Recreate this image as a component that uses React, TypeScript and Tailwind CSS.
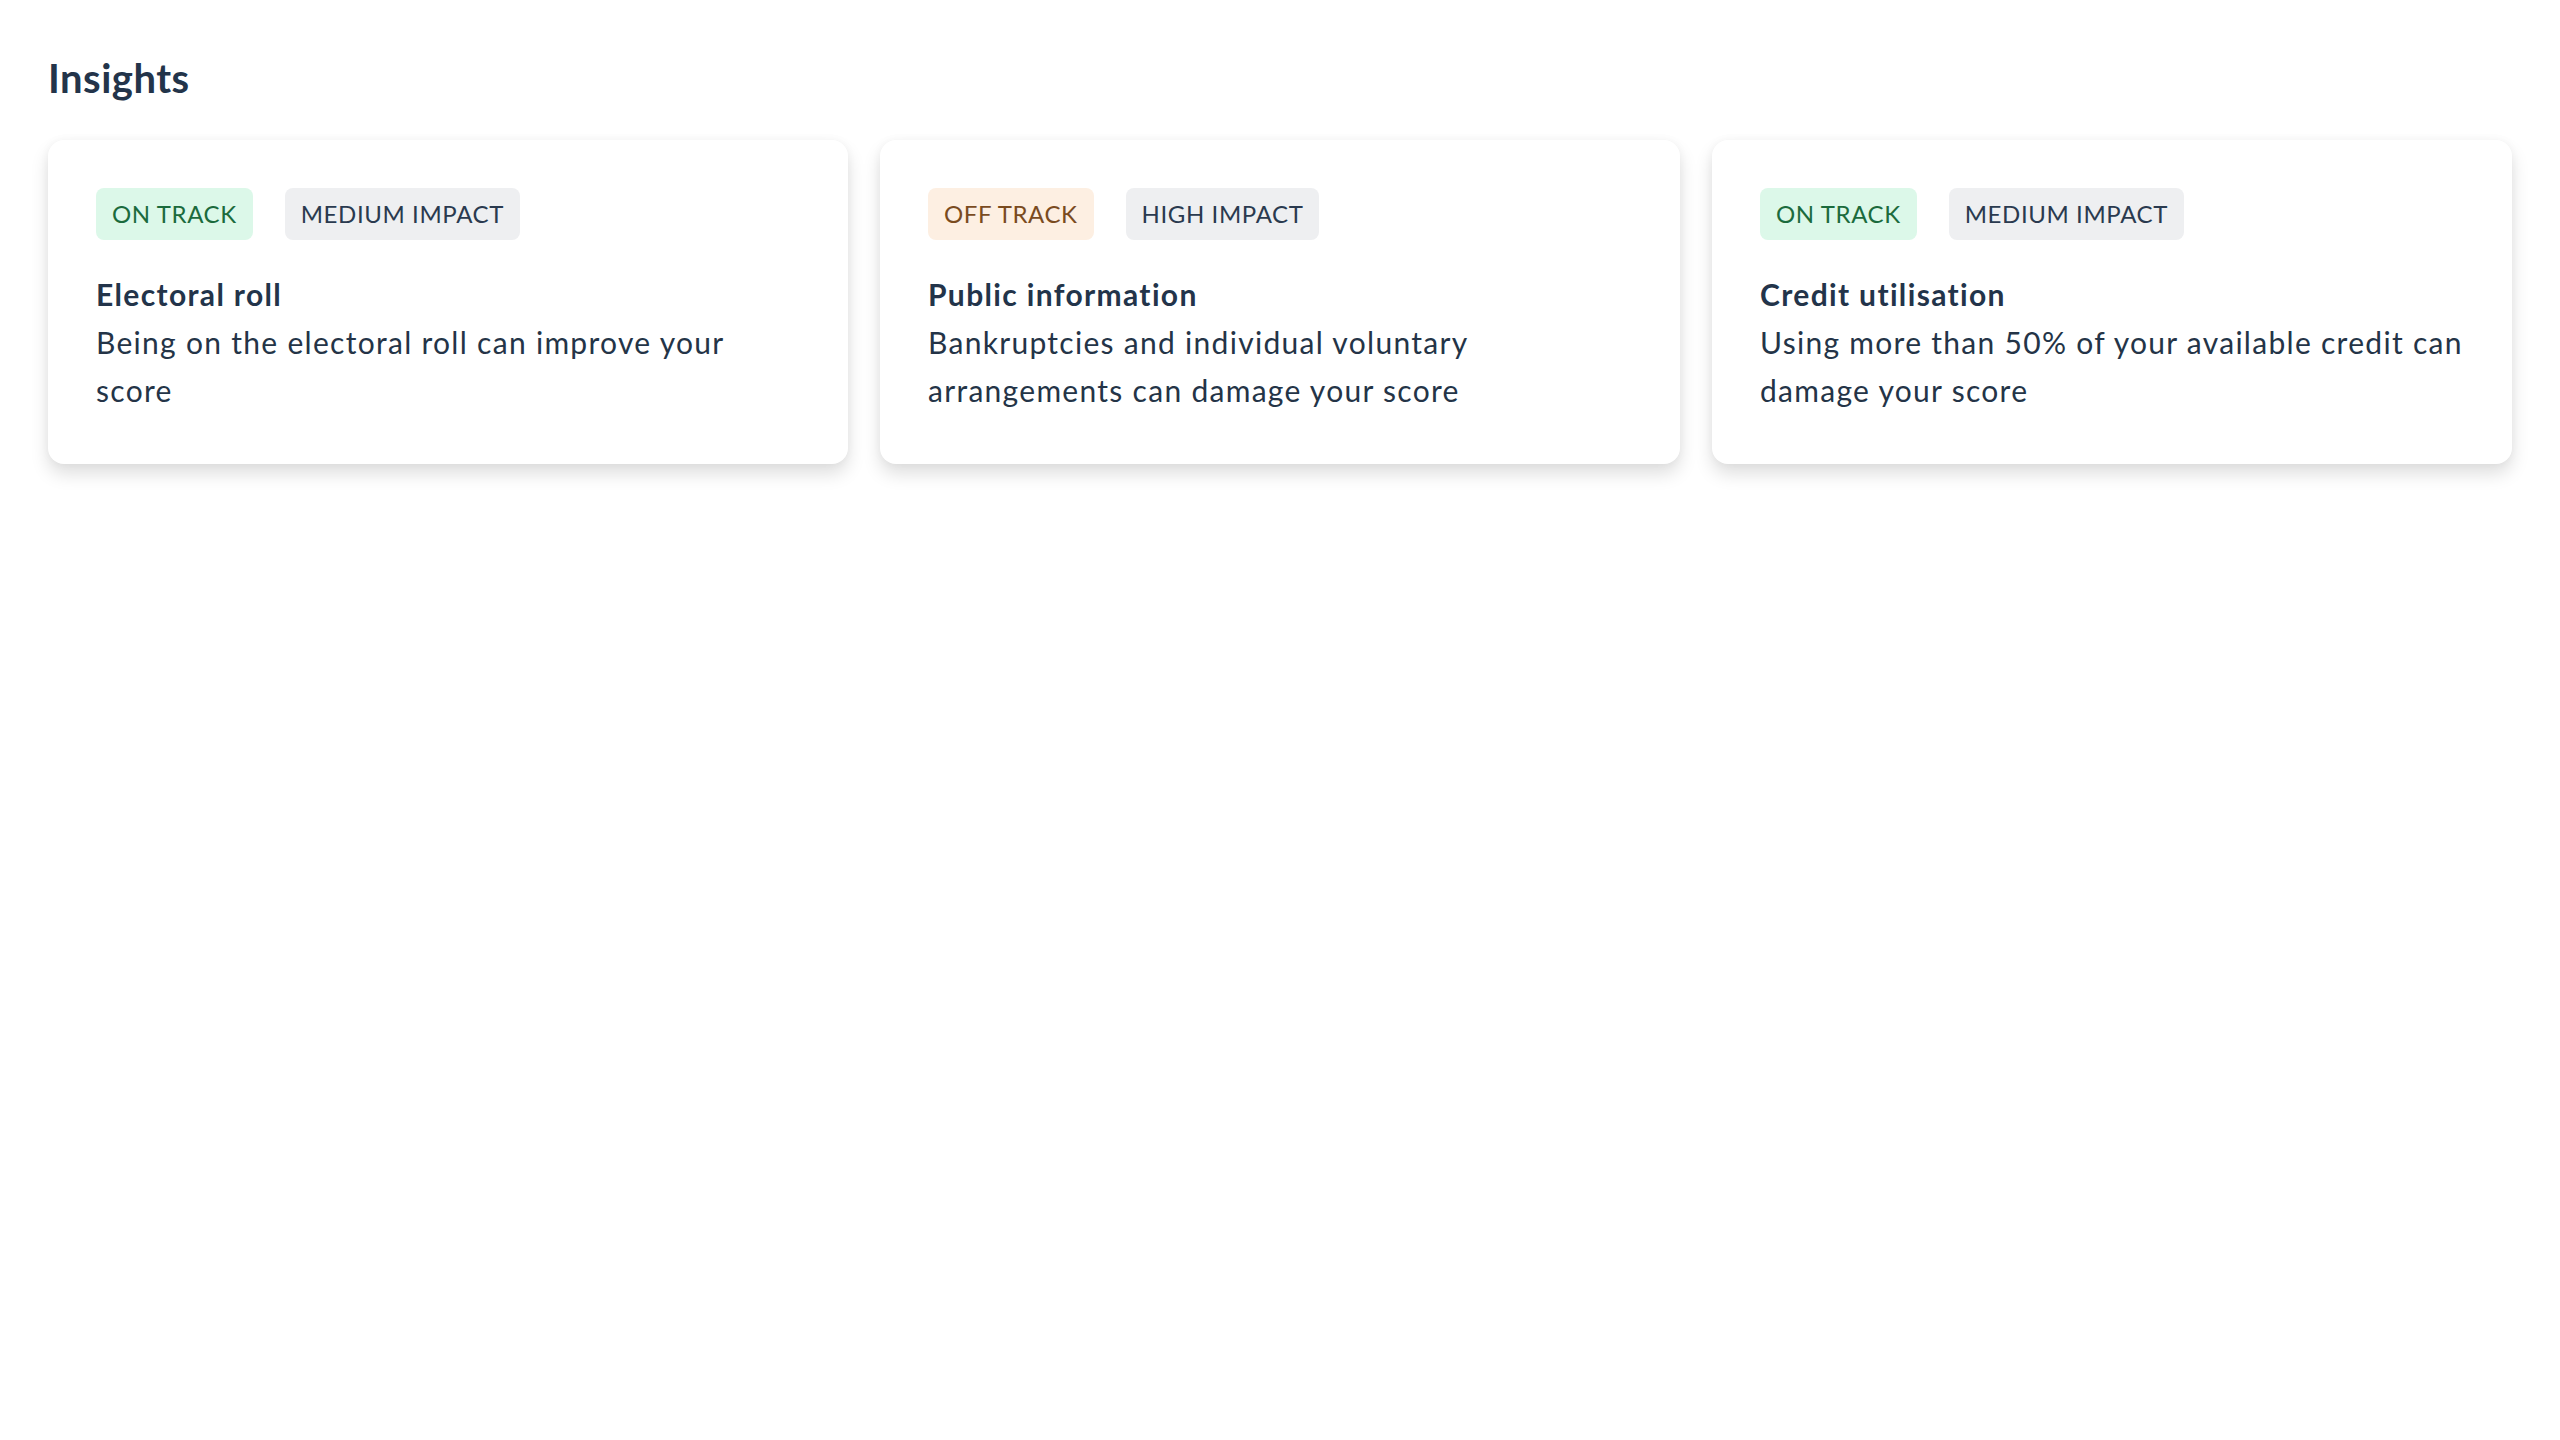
import React from 'react';

type Tone = 'green' | 'orange' | 'gray';

interface Insight {
  status: string;
  statusTone: Tone;
  impact: string;
  title: string;
  body: string;
}

const insights: Insight[] = [
  {
    status: 'On track',
    statusTone: 'green',
    impact: 'Medium impact',
    title: 'Electoral roll',
    body: 'Being on the electoral roll can improve your score',
  },
  {
    status: 'Off track',
    statusTone: 'orange',
    impact: 'High impact',
    title: 'Public information',
    body: 'Bankruptcies and individual voluntary arrangements can damage your score',
  },
  {
    status: 'On track',
    statusTone: 'green',
    impact: 'Medium impact',
    title: 'Credit utilisation',
    body: 'Using more than 50% of your available credit can damage your score',
  },
];

const toneClasses: Record<Tone, string> = {
  green: 'bg-[#dcf8e9] text-[#1b6b3d]',
  orange: 'bg-[#fdefe2] text-[#7a4b1f]',
  gray: 'bg-[#eeeff1] text-[#2a3a4f]',
};

const Badge: React.FC<{ tone: Tone; label: string }> = ({ tone, label }) => (
  <span
    className={`inline-flex items-center h-[52px] px-4 rounded-lg text-[24px] leading-[36px] uppercase tracking-[0.025em] ${toneClasses[tone]}`}
  >
    {label}
  </span>
);

const InsightCard: React.FC<{ insight: Insight }> = ({ insight }) => (
  <div className="bg-white rounded-2xl px-12 pt-12 pb-[50px] shadow-[0_10px_18px_rgba(0,0,0,0.13),0_0_10px_rgba(0,0,0,0.04)]">
    <div className="flex gap-8">
      <Badge tone={insight.statusTone} label={insight.status} />
      <Badge tone="gray" label={insight.impact} />
    </div>
    <h3 className="mt-[30px] text-[30px] leading-[48px] font-bold tracking-[0.045em] text-[#23344a]">
      {insight.title}
    </h3>
    <p className="text-[30px] leading-[48px] tracking-[0.043em] text-[#243447]">{insight.body}</p>
  </div>
);

export default function App() {
  return (
    <div className="min-h-screen bg-white px-12 pt-[48px] font-['Lato','Noto_Sans',sans-serif]">
      <h2 className="text-[40px] leading-[60px] font-bold tracking-[0.012em] text-[#23344a]">Insights</h2>
      <div className="grid grid-cols-3 gap-8 mt-[32px]">
        {insights.map((insight) => (
          <InsightCard key={insight.title} insight={insight} />
        ))}
      </div>
    </div>
  );
}
